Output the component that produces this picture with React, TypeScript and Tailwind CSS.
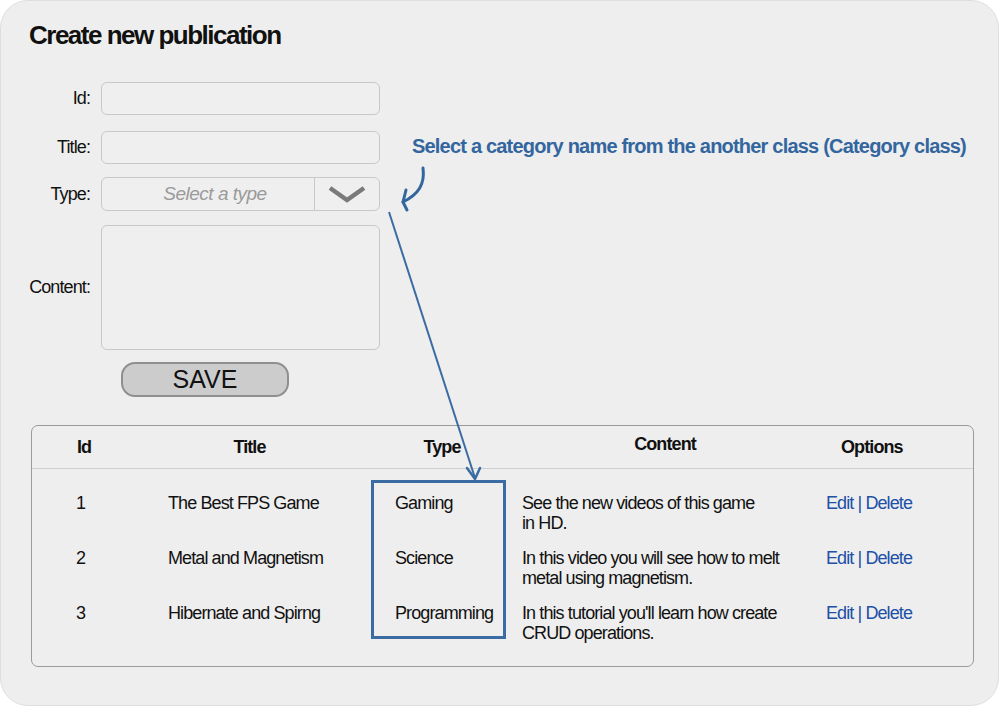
import React from "react";

const rows = [
  { id: "1", title: "The Best FPS Game", type: "Gaming", content: ["See the new videos of this game", "in HD."] },
  { id: "2", title: "Metal and Magnetism", type: "Science", content: ["In this video you will see how to melt", "metal using magnetism."] },
  { id: "3", title: "Hibernate and Spirng", type: "Programming", content: ["In this tutorial you'll learn how create", "CRUD operations."] },
];

const font = "font-['Liberation_Sans',Arial,sans-serif]";

function Field({ label, children, className = "" }: { label: string; children: React.ReactNode; className?: string }) {
  return (
    <div className={`flex items-center ${className}`}>
      <div className="w-[89px] text-right text-[18px] tracking-[-0.9px] text-[#111]">{label}</div>
      <div className="ml-[11px]">{children}</div>
    </div>
  );
}

export default function App() {
  return (
    <div className={`w-[1000px] h-[707px] bg-white ${font}`}>
      <div className="relative w-[999px] h-[706px] rounded-[28px] border border-[#dedede] bg-[#eeeeee]">
        <h1 className="pl-[28px] pt-[19px] text-[26px] leading-[30px] font-bold tracking-[-1.5px] text-[#111]">Create new publication</h1>

        {/* form */}
        <div className="mt-[32px] flex flex-col">
          <Field label="Id:">
            <div className="w-[279px] h-[33px] rounded-[6px] border border-[#c8c8c8] bg-[#efefef]" />
          </Field>
          <Field label="Title:" className="mt-[16px]">
            <div className="w-[279px] h-[33px] rounded-[6px] border border-[#c8c8c8] bg-[#efefef]" />
          </Field>
          <Field label="Type:" className="mt-[13px]">
            <div className="flex w-[279px] h-[34px] rounded-[6px] border border-[#c8c8c8] bg-[#efefef]">
              <div className="flex-1 flex items-center justify-center pl-[14px] text-[19px] italic tracking-[-0.5px] text-[#9a9a9a]">Select a type</div>
              <div className="w-[65px] border-l border-[#c8c8c8] flex items-center justify-center">
                <svg width="38" height="18" viewBox="0 0 38 18">
                  <path d="M2 3 L19 15 L36 3" fill="none" stroke="#7a7a7a" strokeWidth="4.5" />
                </svg>
              </div>
            </div>
          </Field>
          <Field label="Content:" className="mt-[14px]">
            <div className="w-[279px] h-[125px] rounded-[6px] border border-[#c8c8c8] bg-[#efefef]" />
          </Field>
          <button className="ml-[120px] mt-[12px] w-[168px] h-[35px] rounded-[14px] border-2 border-[#8f8f8f] bg-[#cccccc] text-[25px] leading-none text-[#111]">
            SAVE
          </button>
        </div>

        {/* table */}
        <div className="relative ml-[30px] mt-[28px] w-[943px] h-[242px] rounded-[7px] border border-[#9a9a9a]">
          <div className="grid grid-cols-[104px_227px_158px_288px_1fr] h-[43px] border-b border-[#cfcfcf] items-center text-[18px] font-bold tracking-[-0.9px] text-[#111]">
            <div className="text-center">Id</div>
            <div className="text-center">Title</div>
            <div className="text-center">Type</div>
            <div className="text-center -mt-[6px]">Content</div>
            <div className="pl-[32px]">Options</div>
          </div>
          <div className="pt-[24px] text-[18px] leading-[20px] tracking-[-0.9px] text-[#111]">
            {rows.map((r) => (
              <div key={r.id} className="grid grid-cols-[104px_227px_158px_288px_1fr] h-[55px] items-start">
                <div className="pl-[44px]">{r.id}</div>
                <div className="pl-[32px]">{r.title}</div>
                <div className="pl-[32px]">{r.type}</div>
                <div className="pl-[1px]">
                  {r.content.map((l) => (
                    <div key={l}>{l}</div>
                  ))}
                </div>
                <div className="pl-[17px] text-[#2050a8]">Edit | Delete</div>
              </div>
            ))}
          </div>
          {/* highlight box over the Type column */}
          <div className="absolute left-[339px] top-[54px] w-[135px] h-[159px] border-[3px] border-[#3b6ba3]" />
        </div>

        {/* annotation */}
        <div className="absolute left-[411px] top-[130px] text-[20px] font-bold tracking-[-0.8px] text-[#33669e] whitespace-nowrap">
          Select a category name from the another class (Category class)
        </div>
        <svg className="absolute left-0 top-0 pointer-events-none" width="999" height="706" viewBox="0 0 999 706">
          <path d="M422 167 C424 183 418 193 402 201" fill="none" stroke="#33669e" strokeWidth="3" strokeLinecap="round" />
          <path d="M405 189 L402 201 L406 209" fill="none" stroke="#33669e" strokeWidth="3" strokeLinecap="round" strokeLinejoin="round" />
          <path d="M388 211 L474 477" fill="none" stroke="#3b6ba3" strokeWidth="2" />
          <path d="M466 467 L474 478 L479 467" fill="none" stroke="#3b6ba3" strokeWidth="2.5" strokeLinecap="round" strokeLinejoin="round" />
        </svg>
      </div>
    </div>
  );
}
